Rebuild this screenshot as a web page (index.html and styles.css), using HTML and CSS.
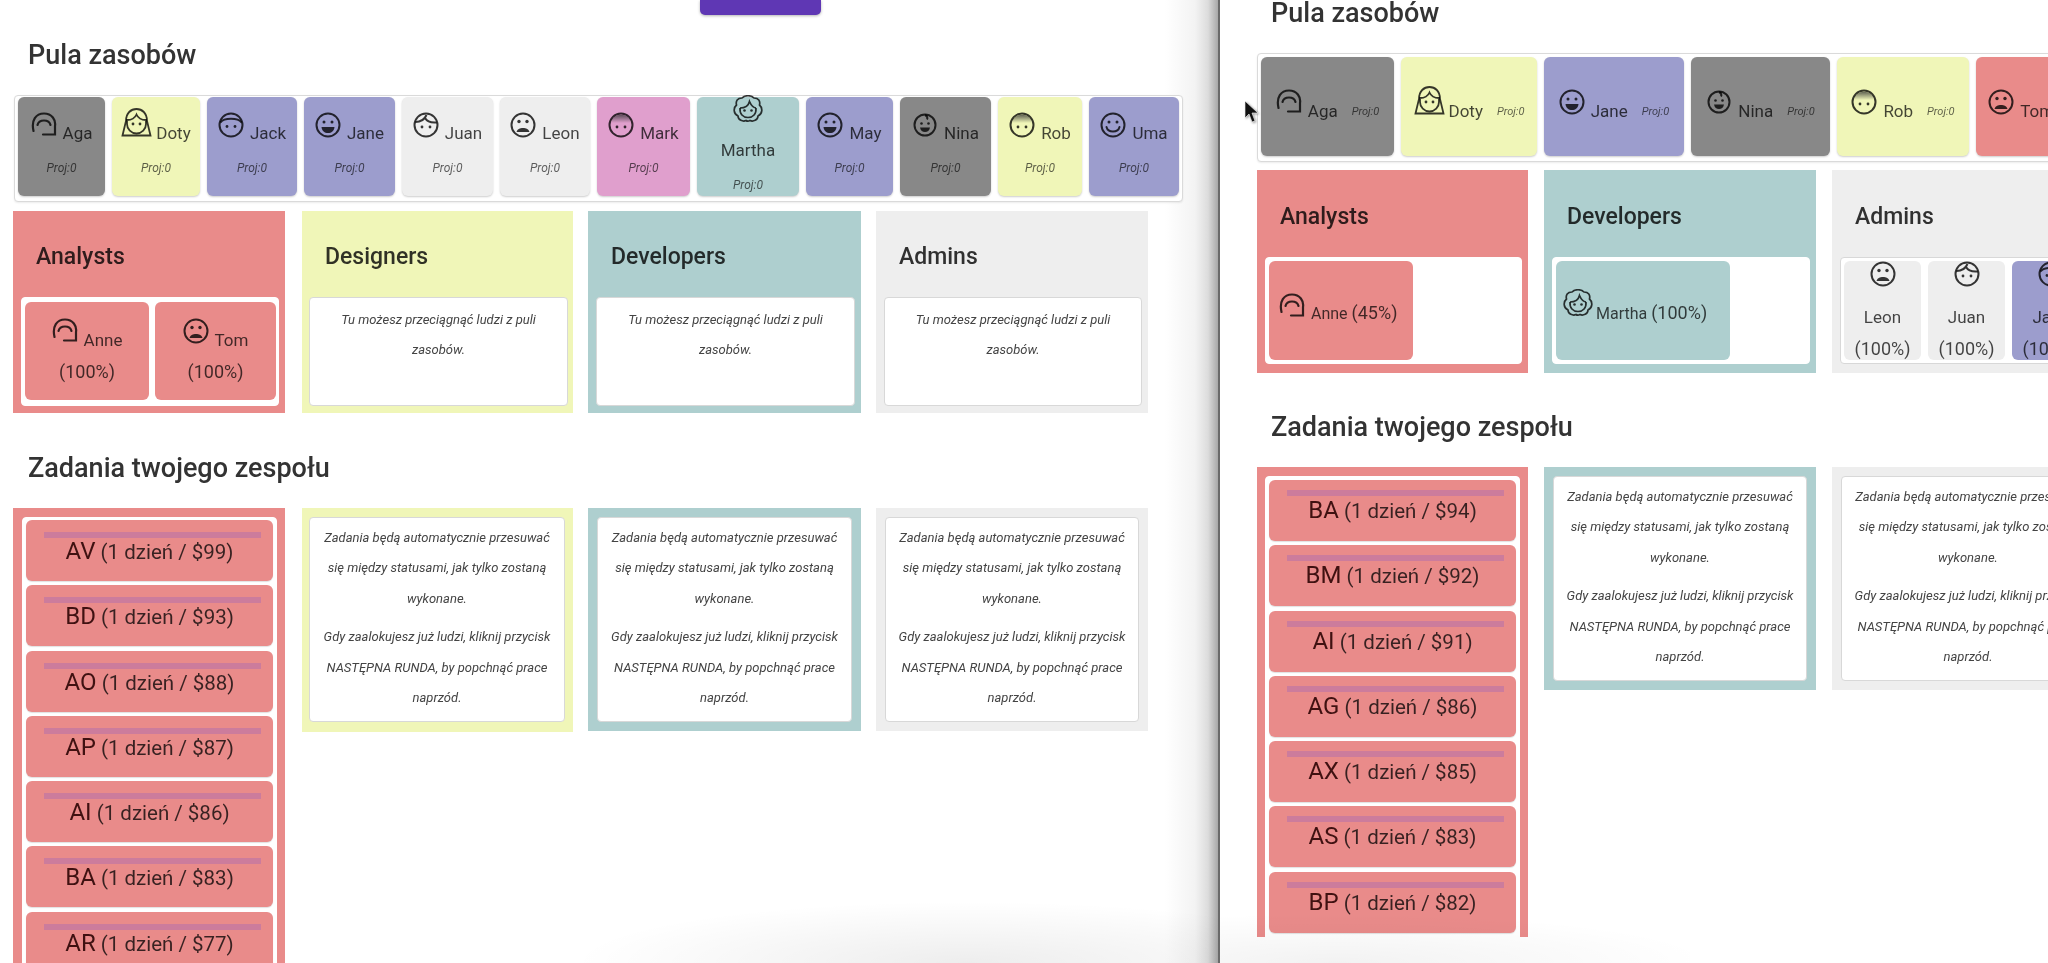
FILE: index.html
```html
<!DOCTYPE html>
<html lang="pl">
<head>
<meta charset="utf-8">
<title>Pula zasobów</title>
<link rel="stylesheet" href="styles.css">
</head>
<body>
<svg class="defs" aria-hidden="true">
  <defs>
    <linearGradient id="cap" x1="0" y1="0" x2="0" y2="1">
      <stop offset="0" stop-color="currentColor" stop-opacity=".75"/>
      <stop offset="1" stop-color="currentColor" stop-opacity="0"/>
    </linearGradient>
  </defs>
  <symbol id="i-aga" viewBox="0 0 26 26"><g fill="none" stroke="currentColor" stroke-width="2.200" stroke-linecap="round"><path d="M2.500 19C0 8 5 1.500 13 1.500S25 8 24 14v8.500H12"/><path d="M6.500 13c1.500-6 11.500-6 13 0"/></g></symbol>
  <symbol id="i-doty" viewBox="0 0 31 29"><g fill="none" stroke="currentColor" stroke-width="1.800"><path d="M1.500 27.500L5 13C5 5 10 1 15.500 1S26 5 26 13l3.500 14.500z"/><path d="M6 16a9.500 9.500 0 0 0 19 0V12c-4 0-8-2-9.500-5.500C14 10 10 12 6 12z"/></g><circle cx="12" cy="16" r="1.400" fill="currentColor"/><circle cx="19" cy="16" r="1.400" fill="currentColor"/></symbol>
  <symbol id="i-jack" viewBox="0 0 26 26"><g fill="none" stroke="currentColor" stroke-width="2"><circle cx="13" cy="13" r="11.500"/><path d="M2.500 10.500C6 5.500 20 5.500 23.500 10.500"/></g><circle cx="9" cy="14.500" r="1.400" fill="currentColor"/><circle cx="17" cy="14.500" r="1.400" fill="currentColor"/></symbol>
  <symbol id="i-juan" viewBox="0 0 26 26"><g fill="none" stroke="currentColor" stroke-width="2"><circle cx="13" cy="13" r="11.500"/><path d="M2.500 10c5 0 9-2.500 11-7M12 6c2 3.500 6 5 11.500 4.500"/></g><circle cx="9" cy="15" r="1.400" fill="currentColor"/><circle cx="17" cy="15" r="1.400" fill="currentColor"/></symbol>
  <symbol id="i-jane" viewBox="0 0 26 26"><circle cx="13" cy="13" r="11.500" fill="none" stroke="currentColor" stroke-width="2"/><circle cx="9" cy="10" r="1.500" fill="currentColor"/><circle cx="17" cy="10" r="1.500" fill="currentColor"/><path d="M6.500 15h13c-.5 4-3 6-6.500 6s-6-2-6.500-6z" fill="currentColor"/></symbol>
  <symbol id="i-leon" viewBox="0 0 26 26"><circle cx="13" cy="13" r="11.500" fill="none" stroke="currentColor" stroke-width="2"/><circle cx="9" cy="9.500" r="1.700" fill="currentColor"/><circle cx="17" cy="9.500" r="1.700" fill="currentColor"/><path d="M6.500 20c1-5.500 12-5.500 13 0z" fill="currentColor"/></symbol>
  <symbol id="i-mark" viewBox="0 0 26 26"><path d="M2 11a11.500 11.500 0 0 1 22 0z" fill="url(#cap)"/><circle cx="13" cy="13" r="11.500" fill="none" stroke="currentColor" stroke-width="2"/><circle cx="9" cy="15" r="1.400" fill="currentColor"/><circle cx="17" cy="15" r="1.400" fill="currentColor"/></symbol>
  <symbol id="i-martha" viewBox="0 0 30 28"><g fill="none" stroke="currentColor" stroke-width="1.700"><path d="M9 3c3-3 9-3 12 0 4.500 0 6.500 3 5.500 7 3.500 3 3 9-1.500 11 0 4-5 6-8 4.500-1.500.8-3 .8-4 0-3 1.500-8-.5-8-4.500-4.500-2-5-8-1.500-11C2.500 6 4.500 3 9 3z"/><path d="M7 13c5 0 8.500-2.500 9.500-6.500C18 10 20 12.500 23 13"/><path d="M7 13c-.5 6 3 9.500 8 9.500s8.500-3.500 8-9.500"/></g><circle cx="11.500" cy="15.500" r="1.300" fill="currentColor"/><circle cx="18.500" cy="15.500" r="1.300" fill="currentColor"/></symbol>
  <symbol id="i-nina" viewBox="0 0 26 26"><g fill="none" stroke="currentColor" stroke-width="2"><circle cx="13" cy="13" r="10.500"/><path d="M13 3c2 1 3 2.500 2 4.500"/></g><circle cx="9.500" cy="11.500" r="1.300" fill="currentColor"/><circle cx="16.500" cy="11.500" r="1.300" fill="currentColor"/><path d="M8 15.500h10c-.5 3-2.500 4.500-5 4.500s-4.500-1.500-5-4.500z" fill="currentColor"/></symbol>
  <symbol id="i-uma" viewBox="0 0 26 26"><g fill="none" stroke="currentColor" stroke-width="2"><circle cx="13" cy="13" r="11.500"/><path d="M6.500 15c1.500 6 11.500 6 13 0" stroke-linecap="round"/></g><circle cx="9" cy="10" r="1.500" fill="currentColor"/><circle cx="17" cy="10" r="1.500" fill="currentColor"/></symbol>
</svg>

<div class="screen">
  <main class="pane pane-left">
    <div class="action-btn"></div>
    <h2 class="heading">Pula zasobów</h2>
    <div class="pool pool-left">
      <div class="card grey"><div class="who"><svg class="ico"><use href="#i-aga"/></svg><span class="name">Aga</span></div><div class="proj">Proj:0</div></div>
      <div class="card yellow"><div class="who"><svg class="ico ico-doty"><use href="#i-doty"/></svg><span class="name">Doty</span></div><div class="proj">Proj:0</div></div>
      <div class="card purple"><div class="who"><svg class="ico"><use href="#i-jack"/></svg><span class="name">Jack</span></div><div class="proj">Proj:0</div></div>
      <div class="card purple"><div class="who"><svg class="ico"><use href="#i-jane"/></svg><span class="name">Jane</span></div><div class="proj">Proj:0</div></div>
      <div class="card light"><div class="who"><svg class="ico"><use href="#i-juan"/></svg><span class="name">Juan</span></div><div class="proj">Proj:0</div></div>
      <div class="card light"><div class="who"><svg class="ico"><use href="#i-leon"/></svg><span class="name">Leon</span></div><div class="proj">Proj:0</div></div>
      <div class="card pink"><div class="who"><svg class="ico"><use href="#i-mark"/></svg><span class="name">Mark</span></div><div class="proj">Proj:0</div></div>
      <div class="card teal card-stack"><svg class="ico ico-martha"><use href="#i-martha"/></svg><span class="name">Martha</span><div class="proj">Proj:0</div></div>
      <div class="card purple"><div class="who"><svg class="ico"><use href="#i-jane"/></svg><span class="name">May</span></div><div class="proj">Proj:0</div></div>
      <div class="card grey"><div class="who"><svg class="ico"><use href="#i-nina"/></svg><span class="name">Nina</span></div><div class="proj">Proj:0</div></div>
      <div class="card yellow"><div class="who"><svg class="ico"><use href="#i-mark"/></svg><span class="name">Rob</span></div><div class="proj">Proj:0</div></div>
      <div class="card purple"><div class="who"><svg class="ico"><use href="#i-uma"/></svg><span class="name">Uma</span></div><div class="proj">Proj:0</div></div>
    </div>

    <div class="board board-left">
      <section class="panel red">
        <h3 class="panel-title">Analysts</h3>
        <div class="box box-pair">
          <div class="person red"><div class="who"><svg class="ico"><use href="#i-aga"/></svg><span class="name">Anne</span></div><div class="amt">(100%)</div></div>
          <div class="person red"><div class="who"><svg class="ico"><use href="#i-leon"/></svg><span class="name">Tom</span></div><div class="amt">(100%)</div></div>
        </div>
      </section>
      <section class="panel yellow panel-shift">
        <h3 class="panel-title">Designers</h3>
        <div class="box box-note"><p class="note">Tu możesz przeciągnąć ludzi z puli zasobów.</p></div>
      </section>
      <section class="panel teal">
        <h3 class="panel-title">Developers</h3>
        <div class="box box-note"><p class="note">Tu możesz przeciągnąć ludzi z puli zasobów.</p></div>
      </section>
      <section class="panel light">
        <h3 class="panel-title">Admins</h3>
        <div class="box box-note"><p class="note">Tu możesz przeciągnąć ludzi z puli zasobów.</p></div>
      </section>
    </div>

    <h2 class="heading heading-tasks">Zadania twojego zespołu</h2>
    <div class="board board-left tasks">
      <section class="column column-list red">
        <div class="box task-list">
          <div class="task red"><i class="bar"></i><div class="task-text"><b>AV</b> (1 dzień / $99)</div></div>
          <div class="task red"><i class="bar"></i><div class="task-text"><b>BD</b> (1 dzień / $93)</div></div>
          <div class="task red"><i class="bar"></i><div class="task-text"><b>AO</b> (1 dzień / $88)</div></div>
          <div class="task red"><i class="bar"></i><div class="task-text"><b>AP</b> (1 dzień / $87)</div></div>
          <div class="task red"><i class="bar"></i><div class="task-text"><b>AI</b> (1 dzień / $86)</div></div>
          <div class="task red"><i class="bar"></i><div class="task-text"><b>BA</b> (1 dzień / $83)</div></div>
          <div class="task red"><i class="bar"></i><div class="task-text"><b>AR</b> (1 dzień / $77)</div></div>
        </div>
      </section>
      <section class="column yellow panel-shift">
        <div class="box box-help"><p class="note">Zadania będą automatycznie przesuwać się między statusami, jak tylko zostaną wykonane.</p><p class="note">Gdy zaalokujesz już ludzi, kliknij przycisk NASTĘPNA RUNDA, by popchnąć prace naprzód.</p></div>
      </section>
      <section class="column teal">
        <div class="box box-help"><p class="note">Zadania będą automatycznie przesuwać się między statusami, jak tylko zostaną wykonane.</p><p class="note">Gdy zaalokujesz już ludzi, kliknij przycisk NASTĘPNA RUNDA, by popchnąć prace naprzód.</p></div>
      </section>
      <section class="column light">
        <div class="box box-help"><p class="note">Zadania będą automatycznie przesuwać się między statusami, jak tylko zostaną wykonane.</p><p class="note">Gdy zaalokujesz już ludzi, kliknij przycisk NASTĘPNA RUNDA, by popchnąć prace naprzód.</p></div>
      </section>
    </div>
  </main>

  <main class="pane pane-right">
    <h2 class="heading heading-top">Pula zasobów</h2>
    <div class="pool pool-right">
      <div class="card card-row grey"><svg class="ico"><use href="#i-aga"/></svg><span class="name">Aga</span><span class="proj">Proj:0</span></div>
      <div class="card card-row yellow"><svg class="ico ico-doty"><use href="#i-doty"/></svg><span class="name">Doty</span><span class="proj">Proj:0</span></div>
      <div class="card card-row purple"><svg class="ico"><use href="#i-jane"/></svg><span class="name">Jane</span><span class="proj">Proj:0</span></div>
      <div class="card card-row grey"><svg class="ico"><use href="#i-nina"/></svg><span class="name">Nina</span><span class="proj">Proj:0</span></div>
      <div class="card card-row yellow"><svg class="ico"><use href="#i-mark"/></svg><span class="name">Rob</span><span class="proj">Proj:0</span></div>
      <div class="card card-row red"><svg class="ico"><use href="#i-leon"/></svg><span class="name">Tom</span><span class="proj">Proj:0</span></div>
    </div>

    <div class="board board-right">
      <section class="panel red">
        <h3 class="panel-title">Analysts</h3>
        <div class="box box-one">
          <div class="person-wide red wide-anne"><svg class="ico"><use href="#i-aga"/></svg><span class="wide-text"><span class="name-in">Anne</span> <span class="amt-in">(45%)</span></span></div>
        </div>
      </section>
      <section class="panel teal">
        <h3 class="panel-title">Developers</h3>
        <div class="box box-one">
          <div class="person-wide teal wide-martha"><svg class="ico ico-martha"><use href="#i-martha"/></svg><span class="wide-text"><span class="name-in">Martha</span> <span class="amt-in">(100%)</span></span></div>
        </div>
      </section>
      <section class="panel light">
        <h3 class="panel-title">Admins</h3>
        <div class="box box-admins">
          <div class="person-tall light"><svg class="ico"><use href="#i-leon"/></svg><span class="name">Leon</span><div class="amt">(100%)</div></div>
          <div class="person-tall light"><svg class="ico"><use href="#i-juan"/></svg><span class="name">Juan</span><div class="amt">(100%)</div></div>
          <div class="person-tall purple"><svg class="ico"><use href="#i-jack"/></svg><span class="name">Jack</span><div class="amt">(100%)</div></div>
        </div>
      </section>
    </div>

    <h2 class="heading heading-tasks-right">Zadania twojego zespołu</h2>
    <div class="board board-right tasks-right">
      <section class="column red column-clip">
        <div class="box task-list task-list-right">
          <div class="task red"><i class="bar"></i><div class="task-text"><b>BA</b> (1 dzień / $94)</div></div>
          <div class="task red"><i class="bar"></i><div class="task-text"><b>BM</b> (1 dzień / $92)</div></div>
          <div class="task red"><i class="bar"></i><div class="task-text"><b>AI</b> (1 dzień / $91)</div></div>
          <div class="task red"><i class="bar"></i><div class="task-text"><b>AG</b> (1 dzień / $86)</div></div>
          <div class="task red"><i class="bar"></i><div class="task-text"><b>AX</b> (1 dzień / $85)</div></div>
          <div class="task red"><i class="bar"></i><div class="task-text"><b>AS</b> (1 dzień / $83)</div></div>
          <div class="task red"><i class="bar"></i><div class="task-text"><b>BP</b> (1 dzień / $82)</div></div>
          <div class="task red"></div>
        </div>
      </section>
      <section class="column teal">
        <div class="box box-help"><p class="note">Zadania będą automatycznie przesuwać się między statusami, jak tylko zostaną wykonane.</p><p class="note">Gdy zaalokujesz już ludzi, kliknij przycisk NASTĘPNA RUNDA, by popchnąć prace naprzód.</p></div>
      </section>
      <section class="column light">
        <div class="box box-help"><p class="note">Zadania będą automatycznie przesuwać się między statusami, jak tylko zostaną wykonane.</p><p class="note">Gdy zaalokujesz już ludzi, kliknij przycisk NASTĘPNA RUNDA, by popchnąć prace naprzód.</p></div>
      </section>
    </div>

    <svg class="cursor" viewBox="0 0 13 22" aria-hidden="true"><path d="M0 0v17l4-4 3 8 3-1-3-8h6z" fill="#111" stroke="#fff" stroke-width=".6"/></svg>
  </main>
</div>
</body>
</html>
```

FILE: styles.css
```css
* { box-sizing: border-box; }
html, body { margin: 0; height: 100%; overflow: hidden; background: #fff; }
body { font-family: Roboto, "Liberation Sans", sans-serif; color: #333; }
.defs { position: absolute; width: 0; height: 0; }

.screen { display: flex; width: 2048px; height: 963px; overflow: hidden; filter: blur(.5px); }
.pane { position: relative; height: 963px; overflow: hidden; flex: none; }
.pane-left {
  width: 1220px;
  border-right: 2px solid #6a6a6a;
  background: linear-gradient(90deg, #fff 1165px, #f3f3f3 1195px, #dcdcdc 1208px, #a8a8a8 1218px);
}
.pane-left::after {
  content: "";
  position: absolute;
  left: 560px; right: 0; bottom: 0; height: 62px;
  background: radial-gradient(ellipse 60% 100% at 62% 100%, rgba(0,0,0,.07), rgba(0,0,0,0));
}
.pane-right { width: 828px; background: #fff; }
.pane-right::after {
  content: "";
  position: absolute;
  left: 0; width: 470px; bottom: 0; height: 50px;
  background: radial-gradient(ellipse 80% 100% at 25% 100%, rgba(0,0,0,.05), rgba(0,0,0,0));
}

.action-btn {
  width: 121px; height: 15px; margin-left: 700px;
  background: #5f37b4;
  border-radius: 0 0 5px 5px;
  box-shadow: 0 1px 3px rgba(0,0,0,.3);
}

.heading {
  margin: 25px 0 25px 28px;
  font-size: 27px; line-height: 30px; font-weight: 500;
  color: #333;
}
.heading-tasks { margin: 40px 0 25px 28px; }
.heading-top { margin: 0 0 27px 51px; line-height: 26px; }
.heading-tasks-right { margin: 39px 0 25px 51px; }

.pool {
  display: grid;
  column-gap: 7px;
  border: 1px solid #dadada;
  border-radius: 4px;
  padding: 1px 3px 5px;
  background: #fff;
  box-shadow: 0 1px 2px rgba(0,0,0,.08);
}
.pool-left {
  margin: 0 35px 0 14px;
  grid-template-columns: 87px 88px 90px 91px 91px 90px 93px 102px 87px 91px 84px 90px;
}
.pool-right {
  width: 940px;
  margin-left: 37px;
  padding-top: 3px;
  grid-template-columns: 133px 136px 140px 139px 132px 132px;
}

.red { background: #e98b8a; }
.yellow { background: #f0f6b8; }
.teal { background: #aecfcf; }
.light { background: #eeeeee; }
.purple { background: #9c9dcd; }
.grey { background: #888888; }
.pink { background: #e09fcd; }

.card {
  height: 99px;
  padding-top: 15px;
  border-radius: 6px;
  text-align: center;
  box-shadow: 0 1px 2px rgba(0,0,0,.2);
}
.who { display: flex; justify-content: center; align-items: flex-start; gap: 6px; }
.ico { display: block; flex: none; width: 26px; height: 26px; color: rgba(0,0,0,.78); }
.ico-doty { width: 31px; height: 29px; margin-top: -4px; margin-right: -2px; }
.ico-martha { width: 30px; height: 28px; }
.name {
  display: block;
  margin-top: 13px;
  font-size: 17px; line-height: 16px;
  color: rgba(0,0,0,.72);
}
.proj {
  margin-top: 19px;
  font-size: 12px; line-height: 16px; font-style: italic;
  color: rgba(0,0,0,.62);
}
.card-stack { padding-top: 0; display: flex; flex-direction: column; align-items: center; }
.card-stack .ico-martha { margin-top: -2px; }
.card-stack .name { margin-top: 19px; }

.card-row { display: flex; justify-content: center; align-items: flex-start; padding-top: 32px; }
.card-row .name { margin: 14px 0 0 6px; }
.card-row .proj { margin: 15px 0 0 14px; font-size: 11px; }
.card-row .ico-doty { margin-top: -3px; margin-right: -2px; }

.board { display: grid; align-items: start; }
.board-left { margin: 9px 0 0 13px; column-gap: 15px; grid-template-columns: 272px 273px 273px 272px; }
.tasks { margin-top: 0; }
.board-right { margin: 8px 0 0 37px; column-gap: 16px; grid-template-columns: 271px 272px 272px; }
.tasks-right { margin-top: 0; }
.panel-shift { margin-left: 2px; }

.panel { height: 202px; padding: 31px 6px 7px 8px; }
.panel.panel-shift { padding: 31px 5px 7px 7px; }
.board-right .panel { height: 203px; padding-top: 32px; }
.panel-title {
  margin: 0 0 25px 15px;
  font-size: 23px; line-height: 30px; font-weight: 500;
  color: rgba(0,0,0,.8);
}
.panel-shift .panel-title { margin-left: 16px; }
.box {
  background: #fff;
  border: 1px solid #d8d8d8;
  border-radius: 4px;
}
.box-pair { display: grid; grid-template-columns: 124px 121px; column-gap: 6px; height: 109px; padding: 4px 3px 0; border-color: #fff; }
.box-note { height: 109px; padding: 7px 18px 0; }
.box-one { height: 107px; padding: 3px; border-color: #fff; }
.box-admins { display: grid; grid-template-columns: 77px 77px 77px; column-gap: 7px; width: 300px; height: 107px; padding: 3px; }

.note {
  margin: 0;
  font-size: 13px; line-height: 30.4px; font-style: italic; text-align: center;
  color: #444;
}
.note + .note { margin-top: 8px; }

.person { height: 98px; padding-top: 16px; border-radius: 6px; text-align: center; }
.person .name { margin-top: 14px; }
.amt { margin-top: 12px; font-size: 18px; line-height: 24px; color: rgba(0,0,0,.72); }

.person-wide { display: flex; height: 99px; padding: 32px 0 0 10px; border-radius: 6px; gap: 6px; align-items: flex-start; }
.wide-anne { width: 144px; }
.wide-martha { width: 174px; padding: 28px 0 0 7px; gap: 3px; }
.wide-text { margin-top: 8px; line-height: 24px; white-space: nowrap; }
.wide-martha .wide-text { margin-top: 12px; }
.name-in { font-size: 16px; color: rgba(0,0,0,.72); }
.amt-in { font-size: 18px; color: rgba(0,0,0,.72); }

.person-tall { height: 99px; border-radius: 6px; display: flex; flex-direction: column; align-items: center; }
.person-tall .name { margin-top: 22px; }
.person-tall .amt { margin-top: 12px; }

.column { padding: 9px; }
.column-list { padding-right: 8px; }
.column.panel-shift { padding: 9px 8px 10px 7px; }
.task-list { padding: 2px 3px 4px; display: flex; flex-direction: column; row-gap: 4.25px; border-color: #fff; }
.task-list-right { padding: 3px; }
.column-clip { height: 470px; overflow: hidden; padding: 9px 8px 0; }
.task {
  flex: none;
  height: 61px;
  border-radius: 6px;
  padding-top: 12px;
  box-shadow: 0 1px 1px rgba(0,0,0,.12);
}
.task-list-right .task { padding-top: 10px; }
.bar { display: block; height: 6px; margin: 0 12px 0 18px; background: #cc7c9c; }
.task-text {
  text-align: center;
  font-size: 20.5px; line-height: 27px;
  color: rgba(0,0,0,.76);
}
.task-list-right .task-text { line-height: 29px; }
.task-text b { font-size: 24px; font-weight: 400; color: rgba(40,0,0,.88); }
.box-help { padding: 5px 9px 8px; }

.cursor { position: absolute; left: 25px; top: 101px; width: 13px; height: 22px; filter: drop-shadow(1px 1px 1px rgba(0,0,0,.4)); }
```
